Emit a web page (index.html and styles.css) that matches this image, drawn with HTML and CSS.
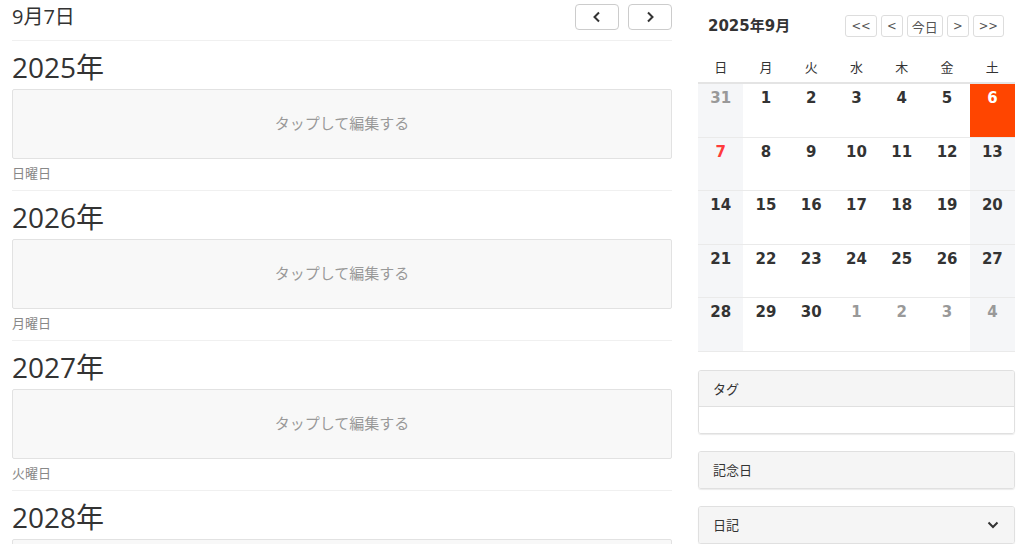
FILE: index.html
```html
<!DOCTYPE html>
<html lang="ja">
<head>
  <meta charset="UTF-8" />
  <meta name="viewport" content="width=device-width, initial-scale=1.0"/>
  <title>9月7日</title>
  <link rel="stylesheet" href="styles.css">
</head>
<body>
  <div class="page">
    <div class="main">
      <div class="main-header">
        <h1 class="day-title">9月7日</h1>
        <div class="nav-buttons">
          <button class="nav-btn">
            <svg width="12" height="12" viewBox="0 0 12 12"><path d="M8 1.5 L3.5 6 L8 10.5" fill="none" stroke="#333" stroke-width="2"/></svg>
          </button>
          <button class="nav-btn">
            <svg width="12" height="12" viewBox="0 0 12 12"><path d="M4 1.5 L8.5 6 L4 10.5" fill="none" stroke="#333" stroke-width="2"/></svg>
          </button>
        </div>
      </div>

      <div class="year-block">
        <h2 class="year">2025年</h2>
        <div class="memo">タップして編集する</div>
        <div class="weekday">日曜日</div>
      </div>
      <div class="year-block">
        <h2 class="year">2026年</h2>
        <div class="memo">タップして編集する</div>
        <div class="weekday">月曜日</div>
      </div>
      <div class="year-block">
        <h2 class="year">2027年</h2>
        <div class="memo">タップして編集する</div>
        <div class="weekday">火曜日</div>
      </div>
      <div class="year-block last">
        <h2 class="year">2028年</h2>
        <div class="memo"></div>
      </div>
    </div>

    <div class="side">
      <div class="cal-header">
        <div class="cal-title">2025年9月</div>
        <div class="cal-buttons">
          <button class="cal-btn">&lt;&lt;</button>
          <button class="cal-btn">&lt;</button>
          <button class="cal-btn today-btn">今日</button>
          <button class="cal-btn">&gt;</button>
          <button class="cal-btn">&gt;&gt;</button>
        </div>
      </div>
      <div class="cal-week">
        <div>日</div><div>月</div><div>火</div><div>水</div><div>木</div><div>金</div><div>土</div>
      </div>
      <div class="cal-grid" id="calGrid"></div>

      <div class="panel">
        <div class="panel-head">タグ</div>
        <div class="panel-body"></div>
      </div>
      <div class="panel">
        <div class="panel-head solo">記念日</div>
      </div>
      <div class="panel">
        <div class="panel-head solo with-icon">
          <span>日記</span>
          <svg width="14" height="14" viewBox="0 0 14 14"><path d="M2.5 4.5 L7 9 L11.5 4.5" fill="none" stroke="#333" stroke-width="2"/></svg>
        </div>
      </div>
    </div>
  </div>

  <script>
    const calGrid = document.getElementById("calGrid");
    const days = [31];
    for (let i = 1; i <= 30; i++) days.push(i);
    days.push(1, 2, 3, 4);

    days.forEach((d, idx) => {
      const col = idx % 7;
      const other = idx === 0 || idx > 30;
      let cls = "cell";
      if (col === 0 || col === 6) cls += " weekend";
      if (other) cls += " other";
      if (!other && d === 6) cls += " today";
      if (!other && d === 7) cls += " sunday";
      calGrid.innerHTML += `<div class="${cls}">${d}</div>`;
    });
  </script>
</body>
</html>
```

FILE: styles.css
```css
body {
  margin: 0;
  font-family: 'Open Sans', 'Noto Sans CJK JP', sans-serif;
  color: #333;
  background: white;
  height: 544px;
  overflow: hidden;
}

.page {
  display: flex;
  gap: 26px;
  padding: 0 9px 0 12px;
}

.main {
  width: 660px;
}

.main-header {
  display: flex;
  justify-content: space-between;
  align-items: center;
  height: 40px;
  border-bottom: 1px solid #f0f0f0;
}

.day-title {
  margin: 0;
  font-size: 20px;
  font-weight: normal;
  line-height: 1;
  margin-top: -6px;
}

.nav-buttons {
  display: flex;
  gap: 9px;
  margin-top: -6px;
}

.nav-btn {
  width: 44px;
  height: 26px;
  background: white;
  border: 1px solid #ccc;
  border-radius: 4px;
  display: flex;
  align-items: center;
  justify-content: center;
  padding: 0;
}

.year-block {
  border-bottom: 1px solid #f0f0f0;
  height: 149px;
}

.year-block.last {
  border-bottom: none;
}

.year {
  margin: 0;
  height: 48px;
  font-size: 28px;
  font-weight: normal;
  line-height: 52px;
}

.memo {
  background: #f8f8f8;
  border: 1px solid #e2e2e2;
  border-radius: 2px;
  display: flex;
  align-items: center;
  justify-content: center;
  font-size: 15px;
  color: #999;
  padding-bottom: 3px;
  height: 65px;
}

.weekday {
  font-size: 13px;
  color: #888;
  line-height: 28px;
}

.side {
  width: 317px;
}

.cal-header {
  display: flex;
  justify-content: space-between;
  align-items: center;
  padding: 14px 11px 0 10px;
  height: 24px;
}

.cal-title {
  font-family: 'DejaVu Sans', 'Noto Sans CJK JP', sans-serif;
  font-weight: bold;
  font-size: 15px;
  margin-top: -3px;
}

.cal-buttons {
  display: flex;
  gap: 4px;
}

.cal-btn {
  height: 22px;
  padding: 0 5px;
  min-width: 22px;
  background: white;
  border: 1px solid #ddd;
  border-radius: 3px;
  font-family: 'DejaVu Sans', 'Noto Sans CJK JP', sans-serif;
  font-size: 11.5px;
  color: #555;
}

.today-btn {
  font-family: 'Noto Sans CJK JP', sans-serif;
  font-size: 13px;
  padding: 0 4px;
  line-height: 1;
}

.cal-week {
  display: grid;
  grid-template-columns: repeat(7, 1fr);
  margin-top: 20px;
  height: 24px;
  border-bottom: 2px solid #e4e4e4;
}

.cal-week div {
  text-align: center;
  font-size: 13px;
  color: #333;
  line-height: 18px;
}

.cal-grid {
  display: grid;
  grid-template-columns: repeat(7, 1fr);
}

.cell {
  border-bottom: 1px solid #eaeaea;
  text-align: center;
  font-family: 'DejaVu Sans', sans-serif;
  font-weight: bold;
  font-size: 15px;
  color: #333;
  padding-top: 5px;
  box-sizing: border-box;
  height: 53.6px;
}

.weekend {
  background: #f5f6f8;
}

.other {
  color: #999;
}

.sunday {
  color: #ff3b3b;
}

.today {
  background: #ff4500;
  color: white;
}

.panel {
  border: 1px solid #e0e0e0;
  border-radius: 3px;
  margin-top: 17px;
  box-shadow: 0 1px 1px rgba(0,0,0,0.08);
  overflow: hidden;
}

.cal-grid + .panel {
  margin-top: 18px;
}

.panel-head {
  background: #f5f5f5;
  height: 35px;
  border-bottom: 1px solid #e0e0e0;
  padding: 0 14px;
  display: flex;
  align-items: center;
  font-size: 13px;
  color: #333;
}

.panel-head.solo {
  border-bottom: none;
  height: 36px;
}

.with-icon {
  justify-content: space-between;
}

.panel-body {
  height: 26px;
  background: white;
}
```
